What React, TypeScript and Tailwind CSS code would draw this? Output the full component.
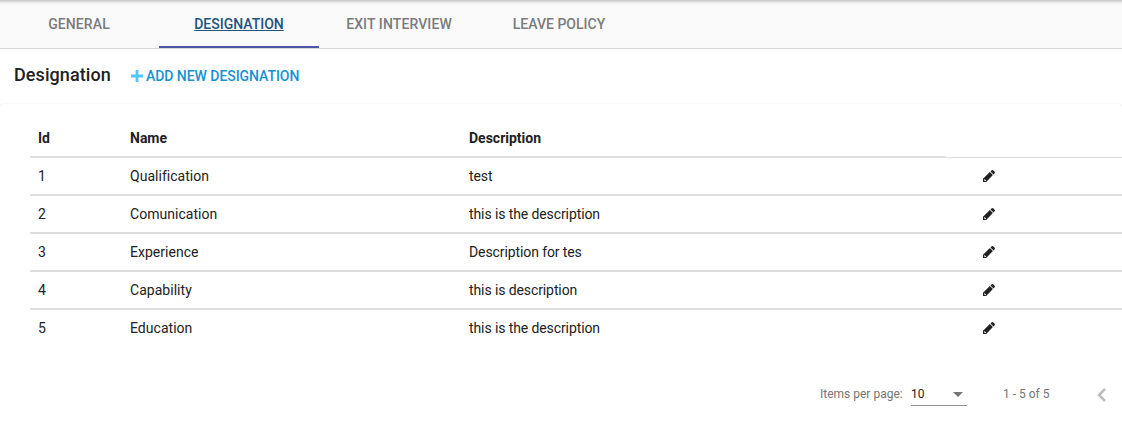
const tabs = ["GENERAL", "DESIGNATION", "EXIT INTERVIEW", "LEAVE POLICY"];

const rows = [
  { id: 1, name: "Qualification", description: "test" },
  { id: 2, name: "Comunication", description: "this is the description" },
  { id: 3, name: "Experience", description: "Description for tes" },
  { id: 4, name: "Capability", description: "this is description" },
  { id: 5, name: "Education", description: "this is the description" },
];

function PlusIcon() {
  return (
    <svg width="12" height="12" viewBox="0 0 12 12" fill="none" stroke="#4fc8fa" strokeWidth="2.8">
      <path d="M0 6h12M6 0v12" />
    </svg>
  );
}

function PencilIcon() {
  return (
    <svg width="12" height="12" viewBox="0 0 12 12" fill="currentColor">
      <path d="M8.4.6c.6-.7 1.4-.7 2 0l1 1c.7.6.7 1.4 0 2l-.8.9-3.1-3.1z" />
      <path
        fillRule="evenodd"
        d="M6.9 2.1L9.9 5.1 3.9 11.3 3.1 12H0V8.8zM1.2 9.2v1.1l.6.6h1.1v-.9h-.8v-.8z"
      />
    </svg>
  );
}

function Tabs() {
  return (
    <nav className="flex h-[49px] border-b border-[#d7d7d7] bg-[#fafafa] bg-[linear-gradient(to_bottom,#cbcbcb_0px,#d0d0d0_1px,#e4e4e4_2px,#f0f0f0_3px,#f7f7f7_4px,#fafafa_6px)] pr-6">
      {tabs.map((tab, i) => (
        <a
          key={tab}
          className={
            i === 1
              ? "flex h-12 w-40 items-center justify-center border-b-2 border-[#4a58a8] pt-0.5 text-sm font-medium text-[#23527c] underline"
              : i === 0
                ? "-ml-px flex h-12 w-40 items-center justify-center text-sm font-medium tracking-[0.1px] text-[#7b7b7b]"
                : i === 2
                  ? "flex h-12 w-40 items-center justify-center text-sm font-medium tracking-[0.1px] text-[#7b7b7b]"
                  : "flex h-12 w-40 items-center justify-center text-sm font-medium text-[#7b7b7b]"
          }
        >
          {tab}
        </a>
      ))}
    </nav>
  );
}

function DesignationTable() {
  return (
    <div className="pl-[30px] text-sm leading-5">
      <div className="flex h-[38px]">
        <div className="flex w-[915px] border-b-2 border-[#dddddd] pt-2 font-bold">
          <div className="w-[92px] pl-2">Id</div>
          <div className="w-[339px] pl-2">Name</div>
          <div className="pl-2">Description</div>
        </div>
        <div className="grow border-b border-[#dddddd]" />
      </div>
      {rows.map((row) => (
        <div key={row.id} className="flex h-[38px] border-b-2 border-[#dddddd] pt-2 last:border-transparent">
          <div className="w-[92px] pl-2">{row.id}</div>
          <div className="w-[339px] pl-2 tracking-[0.03px]">{row.name}</div>
          <div className="w-[484px] pl-2 tracking-[-0.1px]">{row.description}</div>
          <div className="pt-1 pl-[38px]">
            <PencilIcon />
          </div>
        </div>
      ))}
    </div>
  );
}

function Paginator() {
  return (
    <div className="mt-[30px] flex h-8 text-xs text-[#757575]">
      <span className="ml-[820px] w-[91px] leading-8">Items per page:</span>
      <div className="flex h-[28px] w-14 items-center justify-between border-b border-[#949494] pt-[5px] pr-1 text-[#212121]">
        <span>10</span>
        <svg width="10" height="5" viewBox="0 0 10 5" fill="#757575">
          <path d="M0 0h10L5 5z" />
        </svg>
      </div>
      <span className="ml-9 w-[94px] leading-8">1 - 5 of 5</span>
      <svg className="mt-[10px]" width="9" height="14" viewBox="0 0 9 14" fill="none" stroke="#bdbdbd" strokeWidth="2.5">
        <path d="M8 1L2 7l6 6" />
      </svg>
    </div>
  );
}

export default function App() {
  return (
    <div className="h-[434px] overflow-hidden bg-white font-['Roboto',sans-serif] text-[#212121]">
      <Tabs />
      <header className="flex h-[55px] items-start pt-[14px] pl-[14px]">
        <h1 className="w-[117px] text-lg leading-6 font-medium tracking-[0.08px]">Designation</h1>
        <button className="flex items-center gap-[3px] pt-[3px] text-sm leading-5 font-medium tracking-[-0.05px] text-[#1592d0]">
          <PlusIcon />
          ADD NEW DESIGNATION
        </button>
      </header>
      <main className="h-[330px] rounded-t bg-white pt-4 shadow-[0_0_1px_rgba(0,0,0,0.2)]">
        <DesignationTable />
        <Paginator />
      </main>
    </div>
  );
}
